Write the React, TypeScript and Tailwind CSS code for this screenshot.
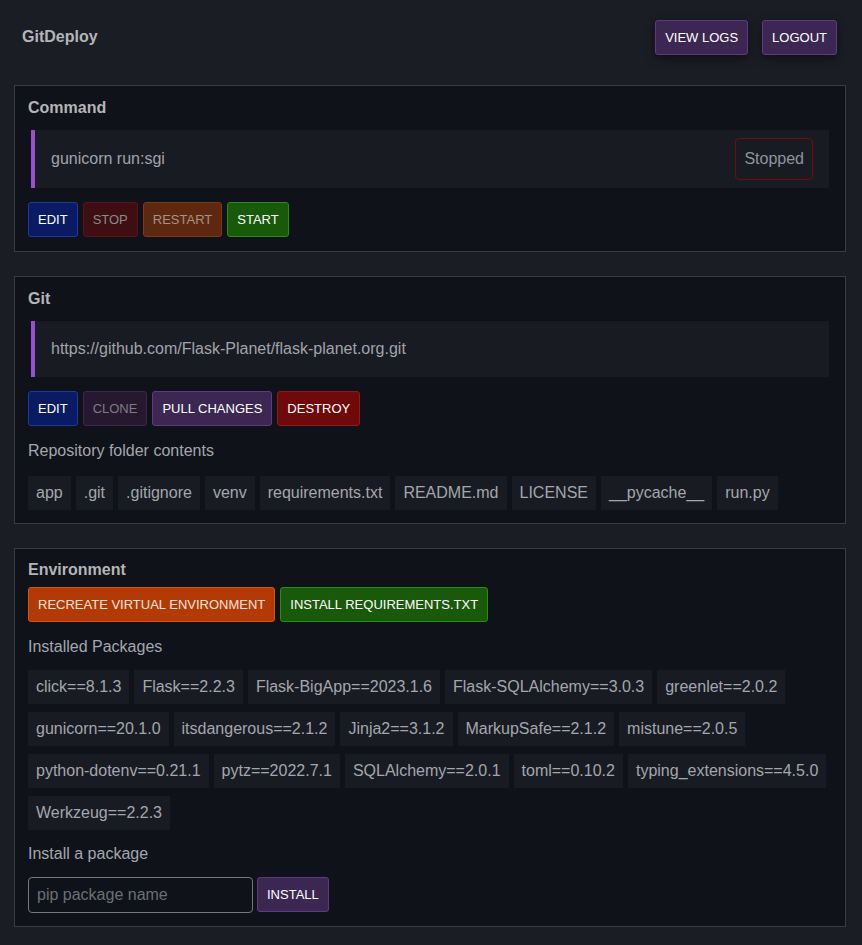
import type { ReactNode } from 'react'

const files = ['app', '.git', '.gitignore', 'venv', 'requirements.txt', 'README.md', 'LICENSE', '__pycache__', 'run.py']

const packages = [
  'click==8.1.3',
  'Flask==2.2.3',
  'Flask-BigApp==2023.1.6',
  'Flask-SQLAlchemy==3.0.3',
  'greenlet==2.0.2',
  'gunicorn==20.1.0',
  'itsdangerous==2.1.2',
  'Jinja2==3.1.2',
  'MarkupSafe==2.1.2',
  'mistune==2.0.5',
  'python-dotenv==0.21.1',
  'pytz==2022.7.1',
  'SQLAlchemy==2.0.1',
  'toml==0.10.2',
  'typing_extensions==4.5.0',
  'Werkzeug==2.2.3',
]

const btnColor: Record<string, string> = {
  purple: 'bg-[#3b2752] border-[#5e3a85] text-white',
  blue: 'bg-[#0b1b63] border-[#1c3a9a] text-white',
  stop: 'bg-[#3f0e12] border-[#581519] text-[#8a8a8c]',
  restart: 'bg-[#5e2810] border-[#7a3a1a] text-[#a4928a]',
  green: 'bg-[#185a0a] border-[#2a8a1a] text-white',
  clone: 'bg-[#26192f] border-[#3a2848] text-[#7c7c82]',
  red: 'bg-[#6e0a0a] border-[#8e1a1a] text-white',
  orange: 'bg-[#b33a05] border-[#d5561a] text-[#f4e6de]',
}

function Btn({ color, children, shadow }: { color: string; children: ReactNode; shadow?: boolean }) {
  return (
    <button
      className={`h-[35px] px-[9px] border rounded-[3px] text-[13px] leading-[15px] ${btnColor[color]} ${
        shadow ? 'shadow-[0_3px_8px_rgba(0,0,0,0.5)]' : ''
      }`}
    >
      {children}
    </button>
  )
}

function Chip({ label }: { label: string }) {
  return <span className="bg-[#181b22] px-2 py-2 text-[16px] leading-[18px] text-[#a3a7ad]">{label}</span>
}

function Card({ children, className = '' }: { children: ReactNode; className?: string }) {
  return (
    <div className={`ml-[14px] mr-[16px] bg-[#0f1219] border border-[#393b41] px-[13px] ${className}`}>
      {children}
    </div>
  )
}

export default function App() {
  return (
    <div
      className="min-h-[945px] bg-[#1a1d24] pb-[19px] text-[#a3a7ad]"
      style={{ fontFamily: '"Liberation Sans", Arial, sans-serif' }}
    >
      {/* Header */}
      <div className="flex items-start justify-between pl-[22px] pr-[25px] pt-[20px]">
        <h1 className="mt-[8px] text-[16px] leading-[18px] font-bold text-[#b5b5b7]">GitDeploy</h1>
        <div className="flex gap-[14px]">
          <Btn color="purple" shadow>VIEW LOGS</Btn>
          <Btn color="purple" shadow>LOGOUT</Btn>
        </div>
      </div>

      {/* Command */}
      <Card className="mt-[30px] pt-[13px] pb-[14px]">
        <h2 className="text-[16px] leading-[18px] font-bold text-[#b5b5b7]">Command</h2>
        <div className="mt-[13px] mx-[3px] flex items-center justify-between bg-[#181b22] border-l-4 border-[#9b4fcf] px-4 py-2 leading-[18px]">
          <span className="text-[16px] leading-[18px] text-[#a0a4ab]">gunicorn run:sgi</span>
          <span className="border border-[#7a0a0a] rounded-[4px] px-2 py-[11px] text-[16px] leading-[18px] text-[#8f949b]">
            Stopped
          </span>
        </div>
        <div className="mt-[14px] flex gap-[5px]">
          <Btn color="blue">EDIT</Btn>
          <Btn color="stop">STOP</Btn>
          <Btn color="restart">RESTART</Btn>
          <Btn color="green">START</Btn>
        </div>
      </Card>

      {/* Git */}
      <Card className="mt-[24px] pt-[13px] pb-[13px]">
        <h2 className="text-[16px] leading-[18px] font-bold text-[#b5b5b7]">Git</h2>
        <div className="mt-[13px] mx-[3px] bg-[#181b22] border-l-4 border-[#9b4fcf] px-4 py-[19px] text-[16px] leading-[18px] text-[#a0a4ab]">
          https://github.com/Flask-Planet/flask-planet.org.git
        </div>
        <div className="mt-[14px] flex gap-[5px]">
          <Btn color="blue">EDIT</Btn>
          <Btn color="clone">CLONE</Btn>
          <Btn color="purple">PULL CHANGES</Btn>
          <Btn color="red">DESTROY</Btn>
        </div>
        <p className="mt-[16px] text-[16px] leading-[18px]">Repository folder contents</p>
        <div className="mt-[16px] flex flex-wrap gap-[5px]">
          {files.map((f) => (
            <Chip key={f} label={f} />
          ))}
        </div>
      </Card>

      {/* Environment */}
      <Card className="mt-[24px] pt-[12px] pb-[13px]">
        <h2 className="text-[16px] leading-[18px] font-bold text-[#b5b5b7]">Environment</h2>
        <div className="mt-[8px] flex gap-[5px]">
          <Btn color="orange">RECREATE VIRTUAL ENVIRONMENT</Btn>
          <Btn color="green">INSTALL REQUIREMENTS.TXT</Btn>
        </div>
        <p className="mt-[16px] text-[16px] leading-[18px]">Installed Packages</p>
        <div className="mt-[14px] flex flex-wrap gap-x-[5px] gap-y-[8px]">
          {packages.map((p) => (
            <Chip key={p} label={p} />
          ))}
        </div>
        <p className="mt-[15px] text-[16px] leading-[18px]">Install a package</p>
        <div className="mt-[14px] flex gap-[4px]">
          <input
            placeholder="pip package name"
            className="w-[225px] h-[36px] bg-[#0f1219] border border-[#76787c] rounded-[4px] px-2 text-[16px] text-[#a3a7ad] placeholder:text-[#6b6f76] outline-none"
          />
          <Btn color="purple">INSTALL</Btn>
        </div>
      </Card>
    </div>
  )
}
